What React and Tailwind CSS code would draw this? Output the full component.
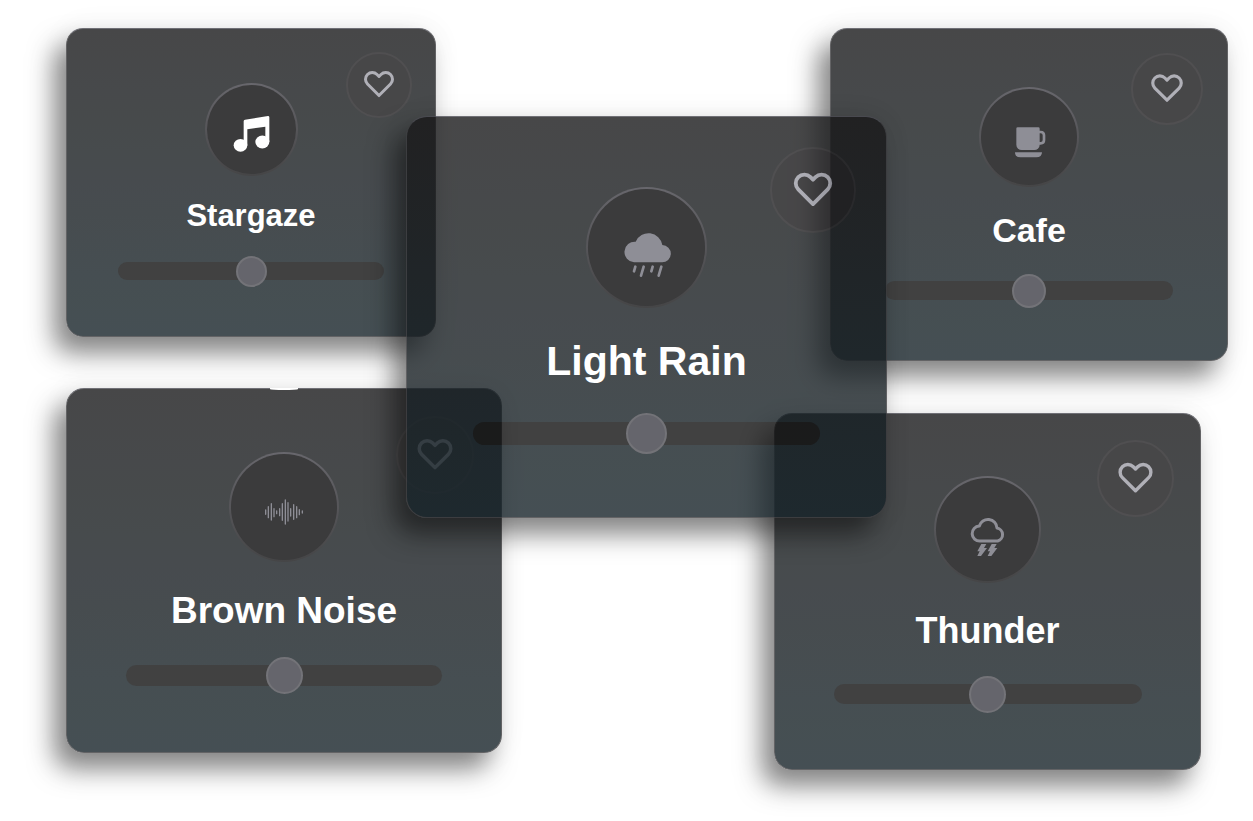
// App.jsx - collage of ambient sound cards with a volume slider each

import React, { useState } from "react";
import { HiOutlineHeart } from "react-icons/hi";

const MusicIcon = () => (
    <svg className="w-[47px] h-[47px] text-white" viewBox="83 91 141 141" fill="currentColor" aria-hidden="true">
        <path d="M130 137q0-4 4-5l69-11q4 0 4 4v74h-12v-46l-54 8v48h-11z" />
        <ellipse cx="120.500" cy="209" rx="20.500" ry="19" />
        <ellipse cx="186" cy="199" rx="21" ry="19.500" />
    </svg>
);

const RainIcon = () => (
    <svg className="w-[60px] h-[60px] text-[#70707b]" viewBox="139 142 180 180" fill="currentColor" aria-hidden="true">
        <path d="M190 275a31 31 0 1 1 5-62a42 42 0 0 1 80 10a26 26 0 0 1-1 52z" />
        <path d="M194 288l-4 14M219 288l-8 27M246 288l-4 14M272 288l-8 27"
              stroke="currentColor" strokeWidth="8" strokeLinecap="round" />
    </svg>
);

const CupIcon = () => (
    <svg className="w-[47px] h-[47px] text-[#70707b]" viewBox="107 101 141 141" fill="currentColor" aria-hidden="true">
        <path d="M142 141h62q4 0 4 4v48a16 16 0 0 1-16 16h-38a16 16 0 0 1-16-16v-48q0-4 4-4z" />
        <path d="M206 155h5q10 0 10 10v14q0 10-10 10h-5" fill="none" stroke="currentColor" strokeWidth="8" />
        <path d="M134 216h81q0 15-17 15h-47q-17 0-17-15z" />
    </svg>
);

const WaveIcon = () => (
    <svg className="w-[60px] h-[60px] text-[#70707b]" viewBox="102 80 180 180" fill="none" aria-hidden="true">
        <path d="M137 179v13M145 169v33M154 160v49M162 175v24M170 182v8M179 175v21M187 160v50M196 149v72M204 157v55M212 175v22M221 163v44M230 169v33M238 178v15M247 182v6"
              stroke="currentColor" strokeWidth="4" strokeLinecap="round" />
    </svg>
);

const ThunderIcon = () => (
    <svg className="w-[60px] h-[60px] text-[#70707b]" viewBox="82 88 180 180" fill="currentColor" aria-hidden="true">
        <path d="M148 211a22 22 0 0 1-2-45a27 27 0 0 1 53 6a20 20 0 0 1 2 39z"
              fill="none" stroke="currentColor" strokeWidth="9" strokeLinejoin="round" />
        <path d="M152 220h15l-7 12h9l-18 24h-11l7-14h-7zM183 220h15l-7 12h9l-18 24h-11l7-14h-7z" />
    </svg>
);

const leftSounds = [
    {
        id: "stargaze",
        name: "Stargaze",
        icon: MusicIcon,
        card: "w-[370px] pt-[54px] pb-[56px] rounded-[17px]",
        like: "top-[23px] right-[23px] w-[66px] h-[66px]",
        heart: "w-[36px] h-[36px]",
        circle: "w-[93px] h-[93px]",
        title: "mt-[24px] text-[31px] leading-[32px]",
        slider: "mt-[30px] w-[266px] h-[18px] [&::-webkit-slider-thumb]:w-[31px] [&::-webkit-slider-thumb]:h-[31px]",
    },
    {
        id: "brown-noise",
        name: "Brown Noise",
        icon: WaveIcon,
        notch: true,
        card: "w-[436px] pt-[63px] pb-[66px] rounded-[18px]",
        like: "top-[27px] right-[27px] w-[78px] h-[78px]",
        heart: "w-[42px] h-[42px]",
        circle: "w-[110px] h-[110px]",
        title: "mt-[30px] text-[37px] leading-[38px]",
        slider: "mt-[35px] w-[316px] h-[21px] [&::-webkit-slider-thumb]:w-[37px] [&::-webkit-slider-thumb]:h-[37px]",
    },
];

const mainSound = {
    id: "light-rain",
    name: "Light Rain",
    icon: RainIcon,
    card: "w-[481px] pt-[70px] pb-[72px] rounded-[21px]",
    like: "top-[30px] right-[30px] w-[86px] h-[86px]",
    heart: "w-[46px] h-[46px]",
    circle: "w-[121px] h-[121px]",
    title: "mt-[32px] text-[41px] leading-[42px]",
    slider: "mt-[40px] w-[347px] h-[23px] [&::-webkit-slider-thumb]:w-[41px] [&::-webkit-slider-thumb]:h-[41px]",
};

const rightSounds = [
    {
        id: "cafe",
        name: "Cafe",
        icon: CupIcon,
        card: "w-[398px] pt-[58px] pb-[60px] rounded-[17px]",
        like: "top-[24px] right-[24px] w-[72px] h-[72px]",
        heart: "w-[38px] h-[38px]",
        circle: "w-[100px] h-[100px]",
        title: "mt-[26px] text-[34px] leading-[35px]",
        slider: "mt-[33px] w-[288px] h-[19px] [&::-webkit-slider-thumb]:w-[34px] [&::-webkit-slider-thumb]:h-[34px]",
    },
    {
        id: "thunder",
        name: "Thunder",
        icon: ThunderIcon,
        card: "w-[427px] mr-[27px] pt-[62px] pb-[65px] rounded-[18px]",
        like: "top-[26px] right-[26px] w-[77px] h-[77px]",
        heart: "w-[41px] h-[41px]",
        circle: "w-[107px] h-[107px]",
        title: "mt-[29px] text-[36px] leading-[37px]",
        slider: "mt-[35px] w-[308px] h-[20px] [&::-webkit-slider-thumb]:w-[37px] [&::-webkit-slider-thumb]:h-[37px]",
    },
];

const SoundCard = ({ sound }) => {
    const [volume, setVolume] = useState(50);
    const [liked, setLiked] = useState(false);
    const Icon = sound.icon;

    return (
        <section
            className={`
                relative flex flex-col items-center opacity-[0.79]
                bg-linear-to-b from-[#171718] to-[#142127]
                border border-[#3a3a3d] border-t-[#4a4a52]
                shadow-[-12px_16px_26px_rgba(0,0,0,0.6),0_0_30px_rgba(0,0,0,0.06)]
                ${sound.card}
            `}
        >
            {sound.notch && (
                <span className="absolute -top-px left-1/2 -translate-x-1/2 w-7 h-0.5 rounded-b-[100%] bg-white" />
            )}

            {/* Like button */}
            <button
                type="button"
                aria-label={`Like ${sound.name}`}
                aria-pressed={liked}
                onClick={() => setLiked(!liked)}
                className={`
                    absolute flex items-center justify-center pb-1 rounded-full cursor-pointer
                    bg-[#171618] border-2 border-[#222123]
                    ${sound.like}
                `}
            >
                <HiOutlineHeart className={`text-[#9b9ba5] ${sound.heart}`} />
            </button>

            {/* Sound icon */}
            <div className={`rounded-full p-0.5 bg-linear-to-b from-[#403f46] to-[#141416] ${sound.circle}`}>
                <div className="flex items-center justify-center w-full h-full rounded-full bg-[#070708]">
                    <Icon />
                </div>
            </div>

            <h2 className={`font-bold text-white ${sound.title}`}>
                <label htmlFor={sound.id}>{sound.name}</label>
            </h2>

            <input
                id={sound.id}
                type="range"
                min="0"
                max="100"
                value={volume}
                onChange={(e) => setVolume(Number(e.target.value))}
                className={`
                    appearance-none rounded-full bg-[#0f0f0f] cursor-pointer
                    [&::-webkit-slider-thumb]:appearance-none
                    [&::-webkit-slider-thumb]:rounded-full
                    [&::-webkit-slider-thumb]:bg-[#3d3d45]
                    [&::-webkit-slider-thumb]:border-2
                    [&::-webkit-slider-thumb]:border-[#4e4e54]
                    ${sound.slider}
                `}
            />
        </section>
    );
};

const App = () => {
    return (
        <main className="min-h-screen flex justify-center items-start pt-7 pb-10 pl-[41px] overflow-hidden bg-white font-['Liberation_Sans',Arial,sans-serif]">
            <div className="shrink-0 flex flex-col items-start gap-[51px]">
                {leftSounds.map((sound) => (
                    <SoundCard key={sound.id} sound={sound} />
                ))}
            </div>

            {/* Main card lies over both columns */}
            <div className="shrink-0 relative z-10 mt-[88px] -ml-24">
                <SoundCard sound={mainSound} />
            </div>

            <div className="shrink-0 flex flex-col items-end gap-[52px] -ml-[113px]">
                {rightSounds.map((sound) => (
                    <SoundCard key={sound.id} sound={sound} />
                ))}
            </div>
        </main>
    );
};

export default App;
